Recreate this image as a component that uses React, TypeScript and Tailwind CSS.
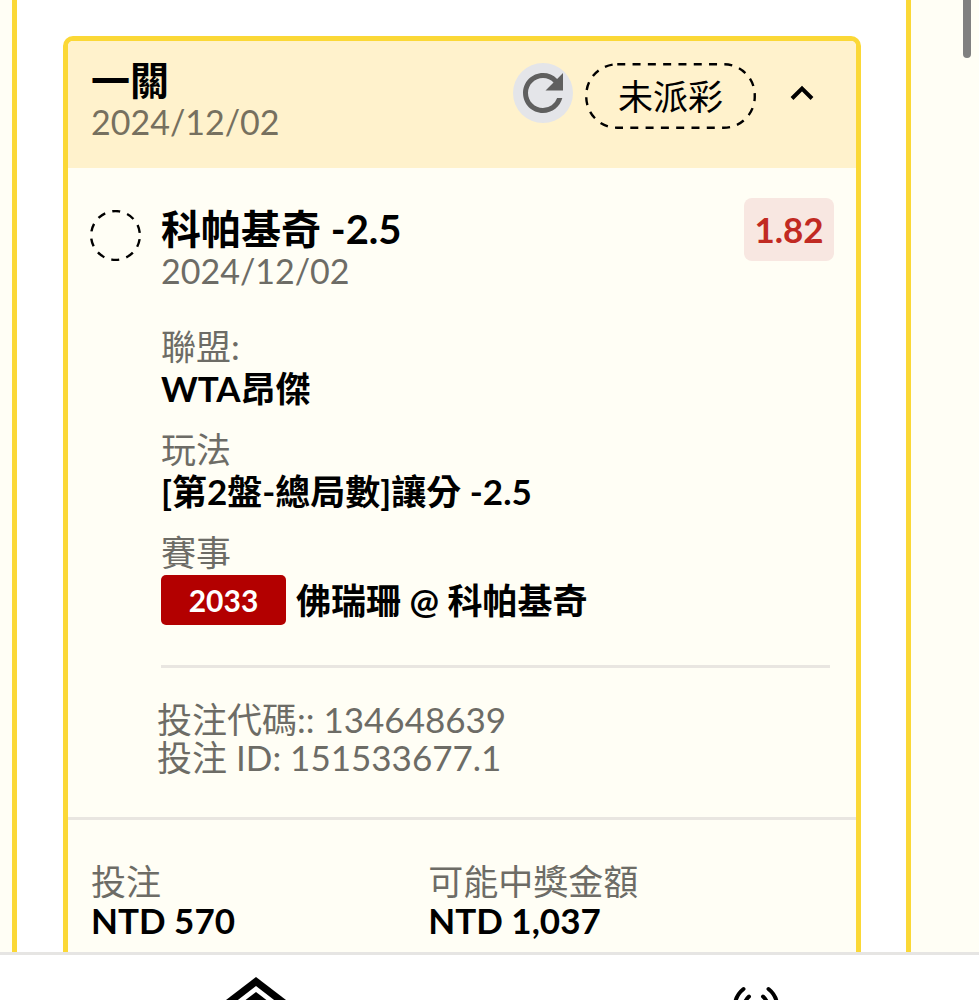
import { useState, type ReactNode } from "react";
import { MdRefresh } from "react-icons/md";

const bet = {
  title: "一關",
  date: "2024/12/02",
  status: "未派彩",
  selection: "科帕基奇 -2.5",
  odds: "1.82",
  league: "WTA昂傑",
  market: "[第2盤-總局數]讓分 -2.5",
  eventNo: "2033",
  match: "佛瑞珊 @ 科帕基奇",
  code: "134648639",
  id: "151533677.1",
  stake: "NTD 570",
  payout: "NTD 1,037",
};

type FieldProps = {
  label: string;
  children: ReactNode;
};

function Field({ label, children }: FieldProps) {
  return (
    <div>
      <dt className="h-10 leading-[38px] text-[#6d6c66]">{label}</dt>
      <dd className="font-bold text-black">{children}</dd>
    </div>
  );
}

function StatusPill({ label }: { label: string }) {
  return (
    <span className="relative flex h-[66px] w-[171px] items-center justify-center text-black">
      <svg className="absolute inset-0 size-full" viewBox="0 0 171 66" fill="none" aria-hidden="true">
        <rect
          x="1.25"
          y="1.25"
          width="168.5"
          height="63.5"
          rx="31"
          stroke="black"
          strokeWidth="2.4"
          strokeDasharray="8 7.3"
        />
      </svg>
      {label}
    </span>
  );
}

function PendingMark() {
  return (
    <svg className="mt-3 size-[51px] shrink-0" viewBox="0 0 51 51" fill="none" aria-hidden="true">
      <circle
        cx="25.5"
        cy="25.5"
        r="24.4"
        stroke="black"
        strokeWidth="2.4"
        strokeDasharray="8 7.33"
        transform="rotate(8.6 25.5 25.5)"
      />
    </svg>
  );
}

function BetCard() {
  const [open, setOpen] = useState(true);

  return (
    <article className="overflow-hidden rounded-[10px] border-[5px] border-[#fbd836] bg-[#fffef5]">
      <header className="flex h-[127px] items-start justify-between bg-[#fff2cc] pt-[18px] pr-10 pl-[23px]">
        <div>
          <h2 className="h-[42px] text-[39px] leading-[42px] font-bold text-black">{bet.title}</h2>
          <p className="h-[42px] text-[34px] leading-[42px] text-[#76705f]">{bet.date}</p>
        </div>
        <div className="flex items-start pt-1">
          <button
            type="button"
            aria-label="重新整理"
            className="mr-3 flex size-[60px] items-center justify-center rounded-full bg-[#e4e5e9] text-[#5f5f5f]"
          >
            <MdRefresh className="size-[60px]" />
          </button>
          <StatusPill label={bet.status} />
          <button
            type="button"
            aria-label="收合"
            aria-expanded={open}
            onClick={() => setOpen(!open)}
            className="ml-8 flex h-[60px] items-center"
          >
            <svg className="h-4 w-7" viewBox="0 0 28 16" fill="none" aria-hidden="true">
              <path d="M4 13.5 14 3.500l10 10" stroke="black" strokeWidth="4" />
            </svg>
          </button>
        </div>
      </header>

      {open ? (
        <section className="flex pt-[30px] pr-[22px] pl-[22px]">
          <PendingMark />
          <div className="ml-5 min-w-0 flex-1">
            <div className="flex items-start justify-between">
              <div>
                <h3 className="h-[63px] text-[40px] leading-[63px] font-bold text-black">
                  {bet.selection}
                </h3>
                <p className="-mt-3 h-[42px] text-[34px] leading-[44px] text-[#6d6c66]">{bet.date}</p>
              </div>
              <span className="flex h-[63px] w-[90px] items-center justify-center rounded-lg bg-[#f8e7e1] font-bold text-[#c12a22]">
                {bet.odds}
              </span>
            </div>

            <dl className="mt-9 flex flex-col gap-5">
              <Field label="聯盟:">
                <span className="block h-[43px] leading-[43px]">{bet.league}</span>
              </Field>
              <Field label="玩法">
                <span className="block h-[43px] leading-[43px]">{bet.market}</span>
              </Field>
              <Field label="賽事">
                <span className="flex h-[54px] items-center gap-[10px]">
                  <span className="flex h-[50px] w-[125px] items-center justify-center rounded-[5px] bg-[#b30000] text-[30px] text-white">
                    {bet.eventNo}
                  </span>
                  {bet.match}
                </span>
              </Field>
            </dl>

            <hr className="mt-[38px] mr-1 border-t-[3px] border-[#e9e6e1]" />
            <div className="-ml-1 pt-8 pb-[41px] text-[#6d6c66]">
              <p className="h-[38px] leading-[38px]">投注代碼:: {bet.code}</p>
              <p className="h-[38px] leading-[38px]">投注 ID: {bet.id}</p>
            </div>
          </div>
        </section>
      ) : null}

      <footer className="border-t-[3px] border-[#e9e6e1] px-[23px] pt-[42px] pb-12">
        <dl className="grid grid-cols-[5fr_6fr]">
          <Field label="投注">
            <span className="block h-9 leading-9">{bet.stake}</span>
          </Field>
          <Field label="可能中獎金額">
            <span className="block h-9 leading-9">{bet.payout}</span>
          </Field>
        </dl>
      </footer>
    </article>
  );
}

function BottomNav() {
  return (
    <nav className="grid h-12 shrink-0 grid-cols-[512fr_467fr] overflow-hidden border-t-[3px] border-[#e6e5e3] bg-white">
      <a href="#home" aria-label="首頁" className="flex justify-center pt-5">
        <svg className="h-[72px] w-[64px]" viewBox="0 0 64 72" aria-hidden="true">
          <path d="M32 2 62 25v32L32 71 2 57V25z" fill="black" />
          <path d="M32 11 54 28v25L32 62 10 53V28z" fill="white" />
          <path d="M32 17 49 30v20L32 57 15 50V30z" fill="black" />
        </svg>
      </a>
      <a href="#live" aria-label="現場" className="flex justify-center pt-[30px] pl-5">
        <svg
          className="h-[44px] w-[52px]"
          viewBox="0 0 52 44"
          fill="none"
          stroke="black"
          strokeWidth="4"
          strokeLinecap="round"
          aria-hidden="true"
        >
          <path d="M13.500 4a23 23 0 0 0 0 36M38.500 4a23 23 0 0 1 0 36" />
          <path d="M19 11.500a14 14 0 0 0 0 21M33 11.500a14 14 0 0 1 0 21" />
          <circle cx="26" cy="22" r="3" fill="black" />
        </svg>
      </a>
    </nav>
  );
}

export default function App() {
  return (
    <div className="flex h-screen flex-col overflow-hidden bg-[#fffef5] font-[Lato,'Noto_Sans_CJK_TC',sans-serif] text-[35px]">
      <main className="relative min-h-0 flex-1 overflow-hidden">
        <div className="mr-[68px] ml-3 min-h-full border-x-[5px] border-[#fbd836] bg-white px-[46px] pr-[45px] pt-9">
          <BetCard />
        </div>
        <div className="absolute top-0 right-2 h-[58px] w-2 rounded-b-full bg-[#808080]" />
      </main>
      <BottomNav />
    </div>
  );
}
